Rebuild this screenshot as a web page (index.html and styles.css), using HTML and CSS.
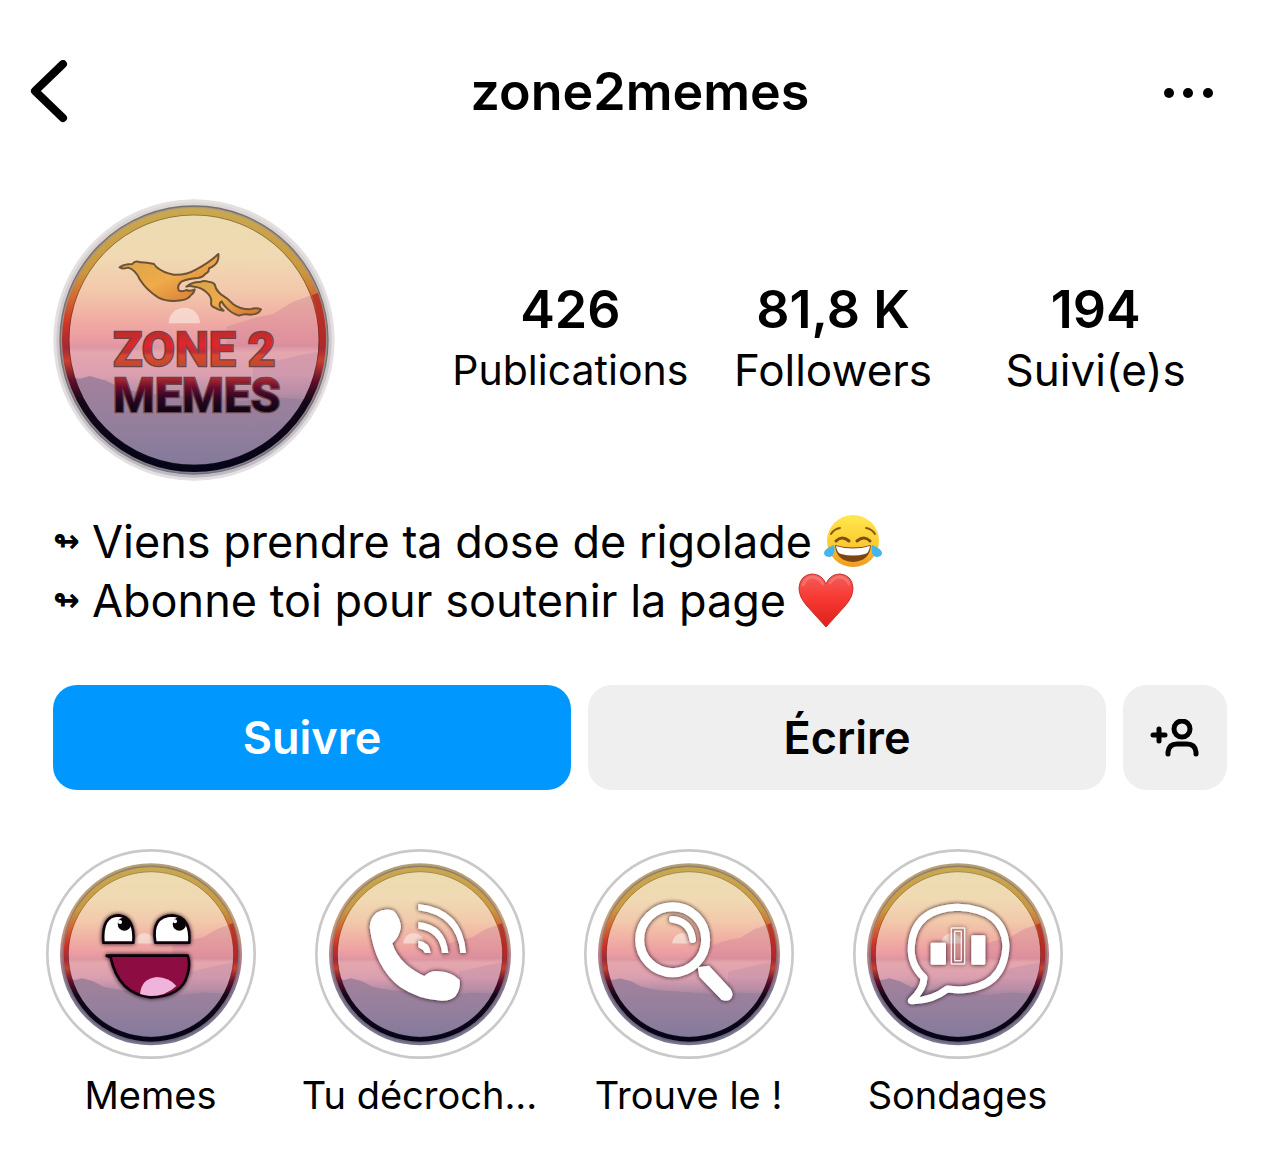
FILE: index.html
```html
<!DOCTYPE html>
<html lang="fr">
<head>
<meta charset="utf-8">
<meta name="viewport" content="width=device-width, initial-scale=1">
<title>zone2memes</title>
<link rel="stylesheet" href="styles.css">
</head>
<body>
<svg class="defs" aria-hidden="true">
  <defs>
    <linearGradient id="sky" x1="0" y1="0" x2="0" y2="1">
      <stop offset="0" stop-color="#ecdcb0"/>
      <stop offset=".17" stop-color="#f0d9b3"/>
      <stop offset=".3" stop-color="#f2c9ab"/>
      <stop offset=".41" stop-color="#f1afa4"/>
      <stop offset=".5" stop-color="#eb9ba2"/>
      <stop offset=".53" stop-color="#dc97a4"/>
      <stop offset=".55" stop-color="#e5a6ad"/>
      <stop offset=".64" stop-color="#dba0b0"/>
      <stop offset=".74" stop-color="#a887a2"/>
      <stop offset="1" stop-color="#80799a"/>
    </linearGradient>
    <linearGradient id="hills" x1="0" y1="0" x2="0" y2="1">
      <stop offset="0" stop-color="#a3819b"/>
      <stop offset=".4" stop-color="#97809d"/>
      <stop offset="1" stop-color="#81799a"/>
    </linearGradient>
    <linearGradient id="rim" gradientUnits="userSpaceOnUse" x1="0" y1="60" x2="0" y2="840">
      <stop offset="0" stop-color="#c9a84f"/>
      <stop offset=".24" stop-color="#c9983f"/>
      <stop offset=".34" stop-color="#d4682f"/>
      <stop offset=".44" stop-color="#cf3327"/>
      <stop offset=".53" stop-color="#a22a35"/>
      <stop offset=".58" stop-color="#c8402f"/>
      <stop offset=".66" stop-color="#5c0e2c"/>
      <stop offset=".74" stop-color="#120619"/>
      <stop offset="1" stop-color="#050418"/>
    </linearGradient>
    <linearGradient id="edge" x1="0" y1="0" x2="0" y2="1">
      <stop offset="0" stop-color="#b3a075"/>
      <stop offset=".3" stop-color="#c8a078"/>
      <stop offset=".5" stop-color="#b97f86"/>
      <stop offset=".7" stop-color="#83768f"/>
      <stop offset="1" stop-color="#77768f"/>
    </linearGradient>
    <linearGradient id="halo" x1="0" y1="0" x2="0" y2="1">
      <stop offset="0" stop-color="#dcd8d3"/>
      <stop offset=".5" stop-color="#cfc8cc"/>
      <stop offset="1" stop-color="#bcbac6"/>
    </linearGradient>
    <linearGradient id="bevel" x1="0" y1="0" x2="0" y2="1">
      <stop offset="0" stop-color="#a89a80"/>
      <stop offset=".5" stop-color="#a08a88"/>
      <stop offset="1" stop-color="#82818f"/>
    </linearGradient>
    <linearGradient id="bird" x1="0" y1="0" x2="1" y2="1">
      <stop offset="0" stop-color="#d8a24a"/>
      <stop offset=".5" stop-color="#efab4a"/>
      <stop offset="1" stop-color="#d4702f"/>
    </linearGradient>
    <linearGradient id="zone" gradientUnits="userSpaceOnUse" x1="0" y1="420" x2="0" y2="530">
      <stop offset="0" stop-color="#b92d2b"/>
      <stop offset=".4" stop-color="#e0262c"/>
      <stop offset=".6" stop-color="#bb2e35"/>
      <stop offset=".7" stop-color="#d9482e"/>
      <stop offset="1" stop-color="#c4452e"/>
    </linearGradient>
    <linearGradient id="memes" gradientUnits="userSpaceOnUse" x1="0" y1="560" x2="0" y2="668">
      <stop offset="0" stop-color="#b42f30"/>
      <stop offset=".3" stop-color="#6b0c30"/>
      <stop offset=".6" stop-color="#2c0622"/>
      <stop offset="1" stop-color="#0c0516"/>
    </linearGradient>
    <linearGradient id="joy" x1="0" y1="0" x2="0" y2="1">
      <stop offset="0" stop-color="#ffe84e"/>
      <stop offset=".55" stop-color="#fccb33"/>
      <stop offset="1" stop-color="#ee9a22"/>
    </linearGradient>
    <linearGradient id="heart" x1="0" y1="0" x2="0" y2="1">
      <stop offset="0" stop-color="#f0605c"/>
      <stop offset=".4" stop-color="#fa3c36"/>
      <stop offset="1" stop-color="#dd2019"/>
    </linearGradient>
    <filter id="shade" x="-20%" y="-20%" width="140%" height="140%">
      <feDropShadow dx="0" dy="0" stdDeviation="7" flood-color="#1c0c12" flood-opacity="1"/>
    </filter>
    <clipPath id="disc"><circle cx="463" cy="450" r="376"/></clipPath>
    <g id="medal">
      <circle cx="463" cy="450" r="376" fill="url(#sky)"/>
      <g clip-path="url(#disc)">
        <path d="M387 400A47 47 0 1 1 481 400Z" fill="#f8e2da" opacity=".75"/>
        <path d="M560 410 640 385 700 372 760 335 860 300V470H560z" fill="#cf8295" opacity=".4"/>
        <path d="M640 530 760 500 860 480V600H640z" fill="#b98aa5" opacity=".35"/>
        <path d="M80 560 120 566 150 558 200 572 250 598 330 612 480 622 600 634 700 622 860 632V850H80z" fill="url(#hills)"/>
      </g>
      <circle cx="463" cy="450" r="385" fill="none" stroke="url(#rim)" stroke-width="22"/>
      <path d="M826 312A390 390 0 0 1 848 470" fill="none" stroke="#b02a24" stroke-width="20" opacity=".75"/>
      <circle cx="463" cy="450" r="375" fill="none" stroke="#1b1010" stroke-opacity=".35" stroke-width="3"/>
    </g>
    <g id="badge">
      <circle cx="333" cy="342" r="311" fill="#fff" stroke="#c9c9c9" stroke-width="8"/>
      <circle cx="333" cy="343" r="273" fill="url(#edge)"/>
      <circle cx="333" cy="343" r="264" fill="none" stroke="#4d4450" stroke-opacity=".35" stroke-width="5"/>
      <use href="#medal" transform="translate(27 46) scale(.661)"/>
    </g>
  </defs>
</svg>

<header class="topbar">
  <button class="icon-button" type="button" aria-label="Retour">
    <svg width="40" height="64" viewBox="0 0 40 64"><path d="M34 4 6 31 34 58" fill="none" stroke="#000" stroke-width="8" stroke-linecap="round" stroke-linejoin="round"/></svg>
  </button>
  <h1 class="username">zone2memes</h1>
  <button class="icon-button more" type="button" aria-label="Plus d'options">
    <svg width="50" height="12" viewBox="0 0 50 12"><circle cx="5" cy="7" r="5"/><circle cx="24" cy="7" r="5"/><circle cx="44" cy="7" r="5"/></svg>
  </button>
</header>

<main>
  <section class="summary">
    <svg class="avatar" viewBox="40 27 846 846" role="img" aria-label="Photo de profil de zone2memes">
      <circle cx="463" cy="450" r="422" fill="#e4dfe1"/>
      <circle cx="463" cy="450" r="413" fill="url(#halo)"/>
      <circle cx="463" cy="450" r="402" fill="url(#bevel)" stroke="#77706f" stroke-width="4"/>
      <use href="#medal"/>
      <g fill="url(#bird)" stroke="#6d5335" stroke-width="6" stroke-linejoin="round">
        <path d="M240 232Q252 222 278 222Q286 210 302 217Q330 219 343 222L350 231Q370 248 402 254Q440 256 470 238Q510 217 536 192Q539 212 524 226Q516 233 508 235Q508 248 496 252Q490 262 474 264Q445 266 425 275Q410 288 418 302Q430 306 440 300Q452 306 465 298Q463 310 454 315Q446 328 425 331Q385 338 355 322Q320 300 300 268Q288 240 266 233Q250 238 240 232Z"/>
        <path d="M440 290Q458 275 482 276Q492 270 506 275Q522 276 526 285Q528 300 545 314Q565 326 580 342Q600 358 630 358Q650 352 664 358Q656 374 632 374Q615 370 598 377Q576 370 562 355Q548 340 546 334Q536 340 542 352L552 362Q535 360 528 354Q514 350 514 340Q518 322 502 308Q486 292 464 290Q448 286 440 290Z"/>
      </g>
      <text class="logo-text"><tspan x="221" y="527" fill="url(#zone)">ZONE 2</tspan><tspan x="219" y="666" fill="url(#memes)">MEMES</tspan></text>
    </svg>
    <ul class="stats">
      <li><a href="#publications"><strong>426</strong><span class="small">Publications</span></a></li>
      <li><a href="#followers"><strong>81,8 K</strong><span>Followers</span></a></li>
      <li><a href="#suivis"><strong>194</strong><span>Suivi(e)s</span></a></li>
    </ul>
  </section>

  <section class="bio">
    <p><span class="loop">↬</span>Viens prendre ta dose de rigolade
      <svg class="emoji" viewBox="0 0 58 56" role="img" aria-label="pleure de rire">
        <circle cx="29" cy="27" r="26" fill="url(#joy)"/>
        <path d="M7 20Q10 15 16 14M51 20Q48 15 42 14" fill="none" stroke="#8a5a10" stroke-width="2" stroke-linecap="round"/>
        <path d="M12 27Q18 21 25 27M33 27Q40 21 46 27" fill="none" stroke="#7a5010" stroke-width="3" stroke-linecap="round"/>
        <path d="M11 31Q29 36 47 31Q46 47 29 48Q12 47 11 31Z" fill="#7d4512"/>
        <path d="M12 32Q29 37 46 32Q45 39 41 40Q29 43 17 40Q13 39 12 32Z" fill="#fff"/>
        <path d="M10 31Q12 41 6 43Q0 43 0 39Q0 35 10 31ZM48 31Q46 41 52 43Q58 43 58 39Q58 35 48 31Z" fill="#45b5ee"/>
      </svg></p>
    <p><span class="loop">↬</span>Abonne toi pour soutenir la page
      <svg class="emoji" viewBox="0 0 58 56" role="img" aria-label="cœur rouge">
        <path d="M28 54Q18 43 9 33Q1 24 1 15Q2 2 14 1Q24 1 28 11Q32 1 42 1Q54 2 55 15Q55 24 47 33Q38 43 28 54Z" fill="url(#heart)" stroke="#c9302c" stroke-width="1"/>
        <path d="M5 12Q8 4 15 4Q22 5 25 11M32 10Q36 4 42 4Q49 5 51 11" fill="none" stroke="#f79a94" stroke-width="3" stroke-linecap="round" opacity=".4"/>
      </svg></p>
  </section>

  <div class="actions">
    <button class="action primary" type="button">Suivre</button>
    <button class="action" type="button">Écrire</button>
    <button class="action square" type="button" aria-label="Suggestions de comptes">
      <svg width="50" height="38" viewBox="0 0 50 38" fill="none" stroke="#000" stroke-width="5" stroke-linecap="round"><path d="M3 16H15M9 10V22"/><circle cx="32" cy="10" r="8"/><path d="M18 35V33Q19 25 27 25H37Q45 25 46 33V35"/></svg>
    </button>
  </div>

  <nav class="highlights" aria-label="Stories à la une">
    <a class="highlight" href="#memes-story">
      <svg class="cover" viewBox="18 27 630 630" aria-hidden="true">
        <use href="#badge"/>
        <g filter="url(#shade)" stroke="#0b0508" stroke-width="8" stroke-linejoin="round">
          <path d="M190 308Q184 226 236 226Q286 232 280 308Z" fill="#fff"/>
          <path d="M346 308Q332 228 398 226Q454 232 448 308Z" fill="#fff"/>
          <path d="M200 347H443Q452 372 442 405Q425 470 332 472Q235 462 212 352Z" fill="#8d0b43"/>
        </g>
        <path d="M300 462Q304 416 350 411Q388 412 409 438Q378 468 332 468Q314 467 300 462Z" fill="#f0b4dc"/>
        <circle cx="253" cy="252" r="20" fill="#080406"/><circle cx="418" cy="252" r="20" fill="#080406"/>
        <circle cx="240" cy="246" r="6" fill="#fff"/><circle cx="405" cy="244" r="6" fill="#fff"/>
      </svg>
      <span>Memes</span>
    </a>
    <a class="highlight" href="#tu-decroches">
      <svg class="cover" viewBox="30 27 630 630" aria-hidden="true">
        <use href="#badge" x="12"/>
        <g filter="url(#shade)" fill="#fff">
          <path d="M214 218Q240 202 266 212Q286 232 288 262Q282 294 262 310Q272 344 302 372Q330 396 358 408Q378 390 402 394Q440 396 464 420Q468 446 452 468Q436 484 408 482Q340 478 284 440Q210 384 194 262Q194 236 214 218Z"/>
          <path d="M340 192Q474 206 483 339H466Q456 226 340 211Z"/>
          <path d="M340 246Q422 254 430 339H411Q404 274 340 266Z"/>
          <path d="M340 302Q374 306 377 339H360Q354 328 340 322Z"/>
        </g>
      </svg>
      <span>Tu décroch...</span>
    </a>
    <a class="highlight" href="#trouve-le">
      <svg class="cover" viewBox="27 27 630 630" aria-hidden="true">
        <use href="#badge" x="9"/>
        <g filter="url(#shade)" fill="none" stroke="#fff" stroke-linecap="round">
          <circle cx="293" cy="299" r="99" stroke-width="27"/>
          <path d="M292 238Q346 244 353 299" stroke-width="20"/>
          <path d="M368 382 402 377 466 446Q478 462 468 476Q454 488 438 478L373 410Z" fill="#fff" stroke="none"/>
        </g>
      </svg>
      <span>Trouve le !</span>
    </a>
    <a class="highlight" href="#sondages">
      <svg class="cover" viewBox="25 27 630 630" aria-hidden="true">
        <use href="#badge" x="7"/>
        <g filter="url(#shade)" fill="none" stroke="#fff" stroke-linejoin="round">
          <path d="M238 413Q196 374 200 318Q208 206 340 202Q478 208 484 318Q478 446 340 450L308 447Q260 484 200 482Q238 446 238 413Z" stroke-width="21"/>
          <path d="M262 312H300V370H262ZM384 290H418V370H384Z" fill="#fff" stroke-width="8"/>
          <path d="M320 264H360V372H320ZM330 274V362H350V274Z" stroke-width="3"/>
        </g>
      </svg>
      <span>Sondages</span>
    </a>
  </nav>
</main>
</body>
</html>
```
FILE: styles.css
```css
* {
  box-sizing: border-box;
}

body {
  margin: 0;
  background: #fff;
  color: #000;
  font-family: Inter, "Liberation Sans", sans-serif;
}

button {
  border: 0;
  padding: 0;
  font: inherit;
  color: inherit;
  background: none;
}

a {
  color: inherit;
  text-decoration: none;
}

svg {
  display: block;
}

.defs {
  position: absolute;
  width: 0;
  height: 0;
}

.topbar {
  display: grid;
  grid-template-columns: 1fr auto 1fr;
  align-items: center;
  padding: 60px 66px 4px 29px;
}

.icon-button {
  justify-self: start;
}

.more {
  justify-self: end;
}

.username {
  margin: 0 0 0 37px;
  font-size: 52px;
  line-height: 64px;
  font-weight: 600;
}

main {
  padding: 71px 53px 60px;
}

.summary {
  display: flex;
  align-items: center;
  gap: 104px;
}

.avatar {
  flex: none;
  width: 282px;
  height: 282px;
}

.logo-text {
  font-family: Roboto, "Liberation Sans", sans-serif;
  font-size: 144px;
  font-weight: 700;
  paint-order: stroke;
  stroke: #6a4448;
  stroke-width: 8px;
}

.stats {
  flex: 1;
  display: grid;
  grid-template-columns: repeat(3, 1fr);
  margin: 0;
  padding: 0;
  list-style: none;
  text-align: center;
}

.stats a {
  display: flex;
  flex-direction: column;
  font-size: 44px;
  line-height: 60px;
}

.stats strong {
  font-size: 52px;
  font-weight: 600;
}

.stats .small {
  font-size: 41px;
}

.bio {
  margin-top: 31px;
  font-size: 45px;
  line-height: 59px;
}

.bio p {
  display: flex;
  align-items: center;
  margin: 0;
}

.loop {
  width: 39px;
  font-family: "DejaVu Sans", sans-serif;
  font-size: 32px;
  font-weight: 700;
}

.emoji {
  width: 58px;
  height: 56px;
  margin-left: 12px;
}

.actions {
  display: grid;
  grid-template-columns: 1fr 1fr 104px;
  gap: 17px;
  margin-top: 55px;
}

.action {
  display: flex;
  align-items: center;
  justify-content: center;
  height: 105px;
  border-radius: 24px;
  background: #efefef;
  font-size: 45px;
  font-weight: 600;
}

.primary {
  background: #0098fe;
  color: #fff;
}

.highlights {
  display: grid;
  grid-template-columns: repeat(4, 269px);
  margin: 59px 0 0 -37px;
}

.highlight {
  display: flex;
  flex-direction: column;
  align-items: center;
  gap: 12px;
  font-size: 38px;
  line-height: 48px;
}

.cover {
  width: 210px;
  height: 210px;
}
```
